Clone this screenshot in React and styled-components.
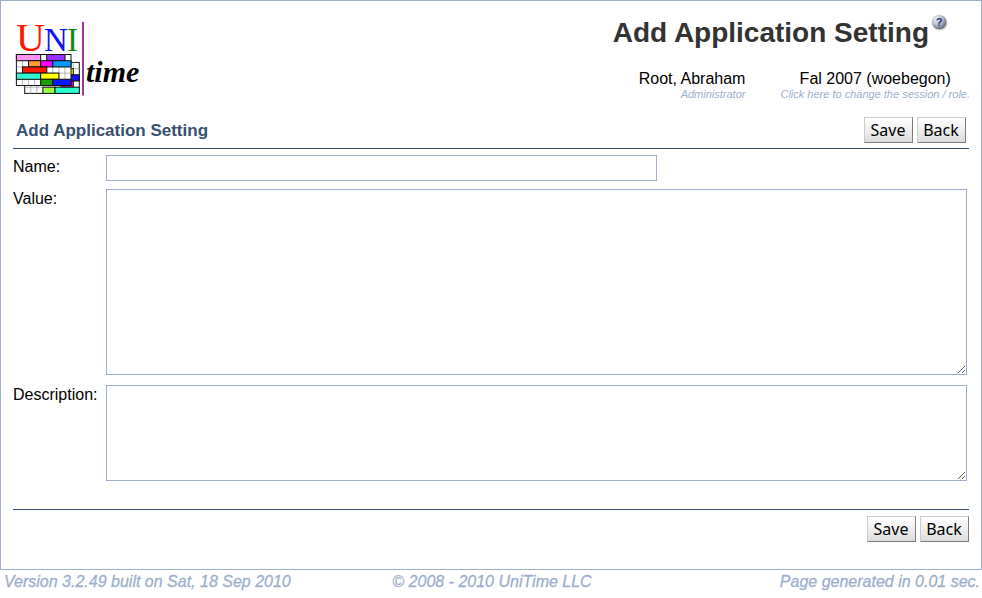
import React from 'react';
import styled, { createGlobalStyle } from 'styled-components';

const line = '#9cb0ce';
const ink = '#38506f';

const GlobalStyle = createGlobalStyle`
  *, *::before, *::after { box-sizing: border-box; }
  body {
    margin: 0;
    background: #fff;
    color: #000;
    font: 16px/20px "Liberation Sans", Arial, Helvetica, sans-serif;
  }
`;

const Page = styled.main`
  border: 1px solid ${line};
  padding: 0 12px 27px;
`;

const Header = styled.header`
  display: flex;
  justify-content: space-between;
  align-items: flex-start;
  min-height: 116px;
`;

const LogoArt = styled.svg`
  display: block;
  width: 130px;
  height: 90px;
  margin: 9px 0 0 2px;
`;

const HeaderInfo = styled.div`
  display: flex;
  flex-direction: column;
  align-items: flex-end;
  padding-top: 12px;
`;

const TitleRow = styled.div`
  display: flex;
  align-items: flex-start;
  gap: 2px;
  padding-right: 21px;
`;

const Title = styled.h1`
  margin: 0;
  color: #333;
  font-size: 28px;
  line-height: 40px;
`;

const HelpButton = styled.button`
  display: block;
  width: 17px;
  height: 18px;
  padding: 0;
  border: 0;
  background: none;
  cursor: pointer;
  svg { display: block; }
`;

const Account = styled.div`
  display: flex;
  gap: 35px;
  padding-top: 16px;
  margin-right: -1px;
`;

const AccountItem = styled.div`
  display: flex;
  flex-direction: column;
  align-items: ${(p) => p.$align};
`;

const Role = styled.span`
  color: ${line};
  font-size: 11px;
  font-style: italic;
  line-height: 10px;
`;

const SessionLink = styled.a`
  color: ${line};
  font-size: 11px;
  font-style: italic;
  line-height: 10px;
  text-decoration: none;
`;

const SectionBar = styled.div`
  display: flex;
  justify-content: space-between;
  align-items: center;
  padding: 0 3px 5px;
  border-bottom: 1px solid ${ink};
`;

const SectionTitle = styled.h2`
  margin: 0;
  padding-top: 2px;
  color: ${ink};
  font-size: 17px;
  line-height: 24px;
`;

const Buttons = styled.div`
  display: flex;
  gap: 4px;
`;

const Button = styled.button`
  height: 26px;
  min-width: 49px;
  padding: 0 6px 0 5px;
  border: 1px solid;
  border-color: #ccc #7d7d7d #7d7d7d #ccc;
  border-radius: 0;
  background: linear-gradient(#fff, #ddd);
  color: #000;
  font: 16px/24px "Noto Sans", "Open Sans", sans-serif;
  cursor: pointer;
`;

const Fields = styled.div`
  display: grid;
  grid-template-columns: 93px 1fr;
  row-gap: 8px;
  padding: 6px 2px 28px 0;
`;

const Label = styled.label`
  padding-top: ${(p) => (p.$inline ? 2 : 0)}px;
`;

const TextInput = styled.input`
  width: 551px;
  max-width: 100%;
  height: 26px;
  padding: 2px 4px;
  border: 1px solid ${line};
  background: #fff;
  font: inherit;
  border-radius: 0;
`;

const TextArea = styled.textarea`
  display: block;
  width: 100%;
  height: ${(p) => p.$height}px;
  margin-bottom: ${(p) => p.$gap || 0}px;
  padding: 2px 4px;
  border: 1px solid ${line};
  border-radius: 0;
  background: #fff;
  font: inherit;
  resize: both;
`;

const BottomBar = styled.div`
  display: flex;
  justify-content: flex-end;
  padding-top: 6px;
  border-top: 1px solid ${ink};
`;

const Footer = styled.footer`
  display: grid;
  grid-template-columns: 1fr auto 1fr;
  padding: 2px 2px 0 4px;
  color: ${line};
  font-style: italic;
  font-size: 16px;
  line-height: 20px;
  -webkit-text-stroke: 0.3px ${line};
`;

const FooterEnd = styled.span`
  text-align: right;
`;

function Sheet({ x, y, blocks }) {
  return (
    <g transform={`translate(${x} ${y})`} stroke="#111">
      <rect width="54.6" height="31" fill="#fff" strokeWidth="1" />
      <path
        d={
          [1, 2, 3, 4, 5, 6, 7, 8].map((c) => `M${c * 6.07} 0V31`).join('') +
          [1, 2, 3, 4].map((r) => `M0 ${r * 6.2}H54.6`).join('')
        }
        stroke="#999"
        strokeWidth="0.7"
      />
      {blocks.map(([row, from, to, fill]) => (
        <rect key={`${row}-${from}`} x={from * 6.07} y={row * 6.2} width={(to - from) * 6.07} height="6.2" fill={fill} strokeWidth="1" />
      ))}
    </g>
  );
}

const backBlocks = [
  [1, 6, 8, '#ffff00'],
  [2, 7, 9, '#1414ff'],
  [3, 6, 8, '#ff00dc'],
  [4, 3, 5, '#9cff38'],
  [4, 5, 9, '#2cffd0'],
];
const frontBlocks = [
  [0, 0, 4, '#ff94f4'],
  [0, 5, 8, '#9830ff'],
  [1, 2, 4, '#ff9a38'],
  [1, 4, 6, '#ff00ff'],
  [1, 6, 9, '#0898ff'],
  [2, 1, 5, '#ff1800'],
  [3, 0, 4, '#30f8d4'],
  [3, 4, 7, '#ffff00'],
  [4, 4, 6, '#18a000'],
  [4, 6, 9, '#0818ff'],
];

function Logo() {
  return (
    <LogoArt viewBox="15 10 130 90" role="img" aria-label="UniTime">
      <g fontFamily="'Liberation Serif', serif">
        <text x="16" y="51" fontSize="40" fill="#ff1800">U</text>
        <text x="44" y="51" fontSize="33" fill="#1212f5">N</text>
        <text x="67" y="51" fontSize="33" fill="#128a12">I</text>
        <text x="86" y="82" fontSize="30" fontStyle="italic" fontWeight="bold">time</text>
      </g>
      <Sheet x={24.7} y={62.4} blocks={backBlocks} />
      <Sheet x={16.4} y={54.5} blocks={frontBlocks} />
      <path d="M83 22V95.500" stroke="#a0359d" strokeWidth="2" />
    </LogoArt>
  );
}

function HelpIcon() {
  return (
    <svg width="17" height="18" viewBox="0 0 17 18" aria-hidden="true">
      <defs>
        <radialGradient id="ball" cx="36%" cy="30%" r="72%">
          <stop offset="0" stopColor="#f0f4f8" />
          <stop offset="0.55" stopColor="#b4bfcd" />
          <stop offset="1" stopColor="#5c6878" />
        </radialGradient>
      </defs>
      <circle cx="9" cy="10" r="7.500" fill="#777" opacity="0.4" />
      <circle cx="8" cy="9" r="7.300" fill="url(#ball)" />
      <text x="8" y="13" textAnchor="middle" fontFamily="'Liberation Sans', sans-serif" fontSize="11" fontWeight="bold" fill="#26306e">?</text>
    </svg>
  );
}

function Actions() {
  return (
    <Buttons>
      <Button type="submit">Save</Button>
      <Button type="button">Back</Button>
    </Buttons>
  );
}

export default function App() {
  return (
    <>
      <GlobalStyle />
      <Page>
        <Header>
          <Logo />
          <HeaderInfo>
            <TitleRow>
              <Title>Add Application Setting</Title>
              <HelpButton type="button" aria-label="Help"><HelpIcon /></HelpButton>
            </TitleRow>
            <Account>
              <AccountItem $align="flex-end">
                <span>Root, Abraham</span>
                <Role>Administrator</Role>
              </AccountItem>
              <AccountItem $align="center">
                <span>Fal 2007 (woebegon)</span>
                <SessionLink href="#session">Click here to change the session / role.</SessionLink>
              </AccountItem>
            </Account>
          </HeaderInfo>
        </Header>
        <form onSubmit={(e) => e.preventDefault()}>
          <SectionBar>
            <SectionTitle>Add Application Setting</SectionTitle>
            <Actions />
          </SectionBar>
          <Fields>
            <Label htmlFor="name" $inline>Name:</Label>
            <TextInput id="name" type="text" />
            <Label htmlFor="value">Value:</Label>
            <TextArea id="value" $height={186} $gap={2} />
            <Label htmlFor="description">Description:</Label>
            <TextArea id="description" $height={96} />
          </Fields>
          <BottomBar>
            <Actions />
          </BottomBar>
        </form>
      </Page>
      <Footer>
        <span>Version 3.2.49 built on Sat, 18 Sep 2010</span>
        <span>© 2008 - 2010 UniTime LLC</span>
        <FooterEnd>Page generated in 0.01 sec.</FooterEnd>
      </Footer>
    </>
  );
}
